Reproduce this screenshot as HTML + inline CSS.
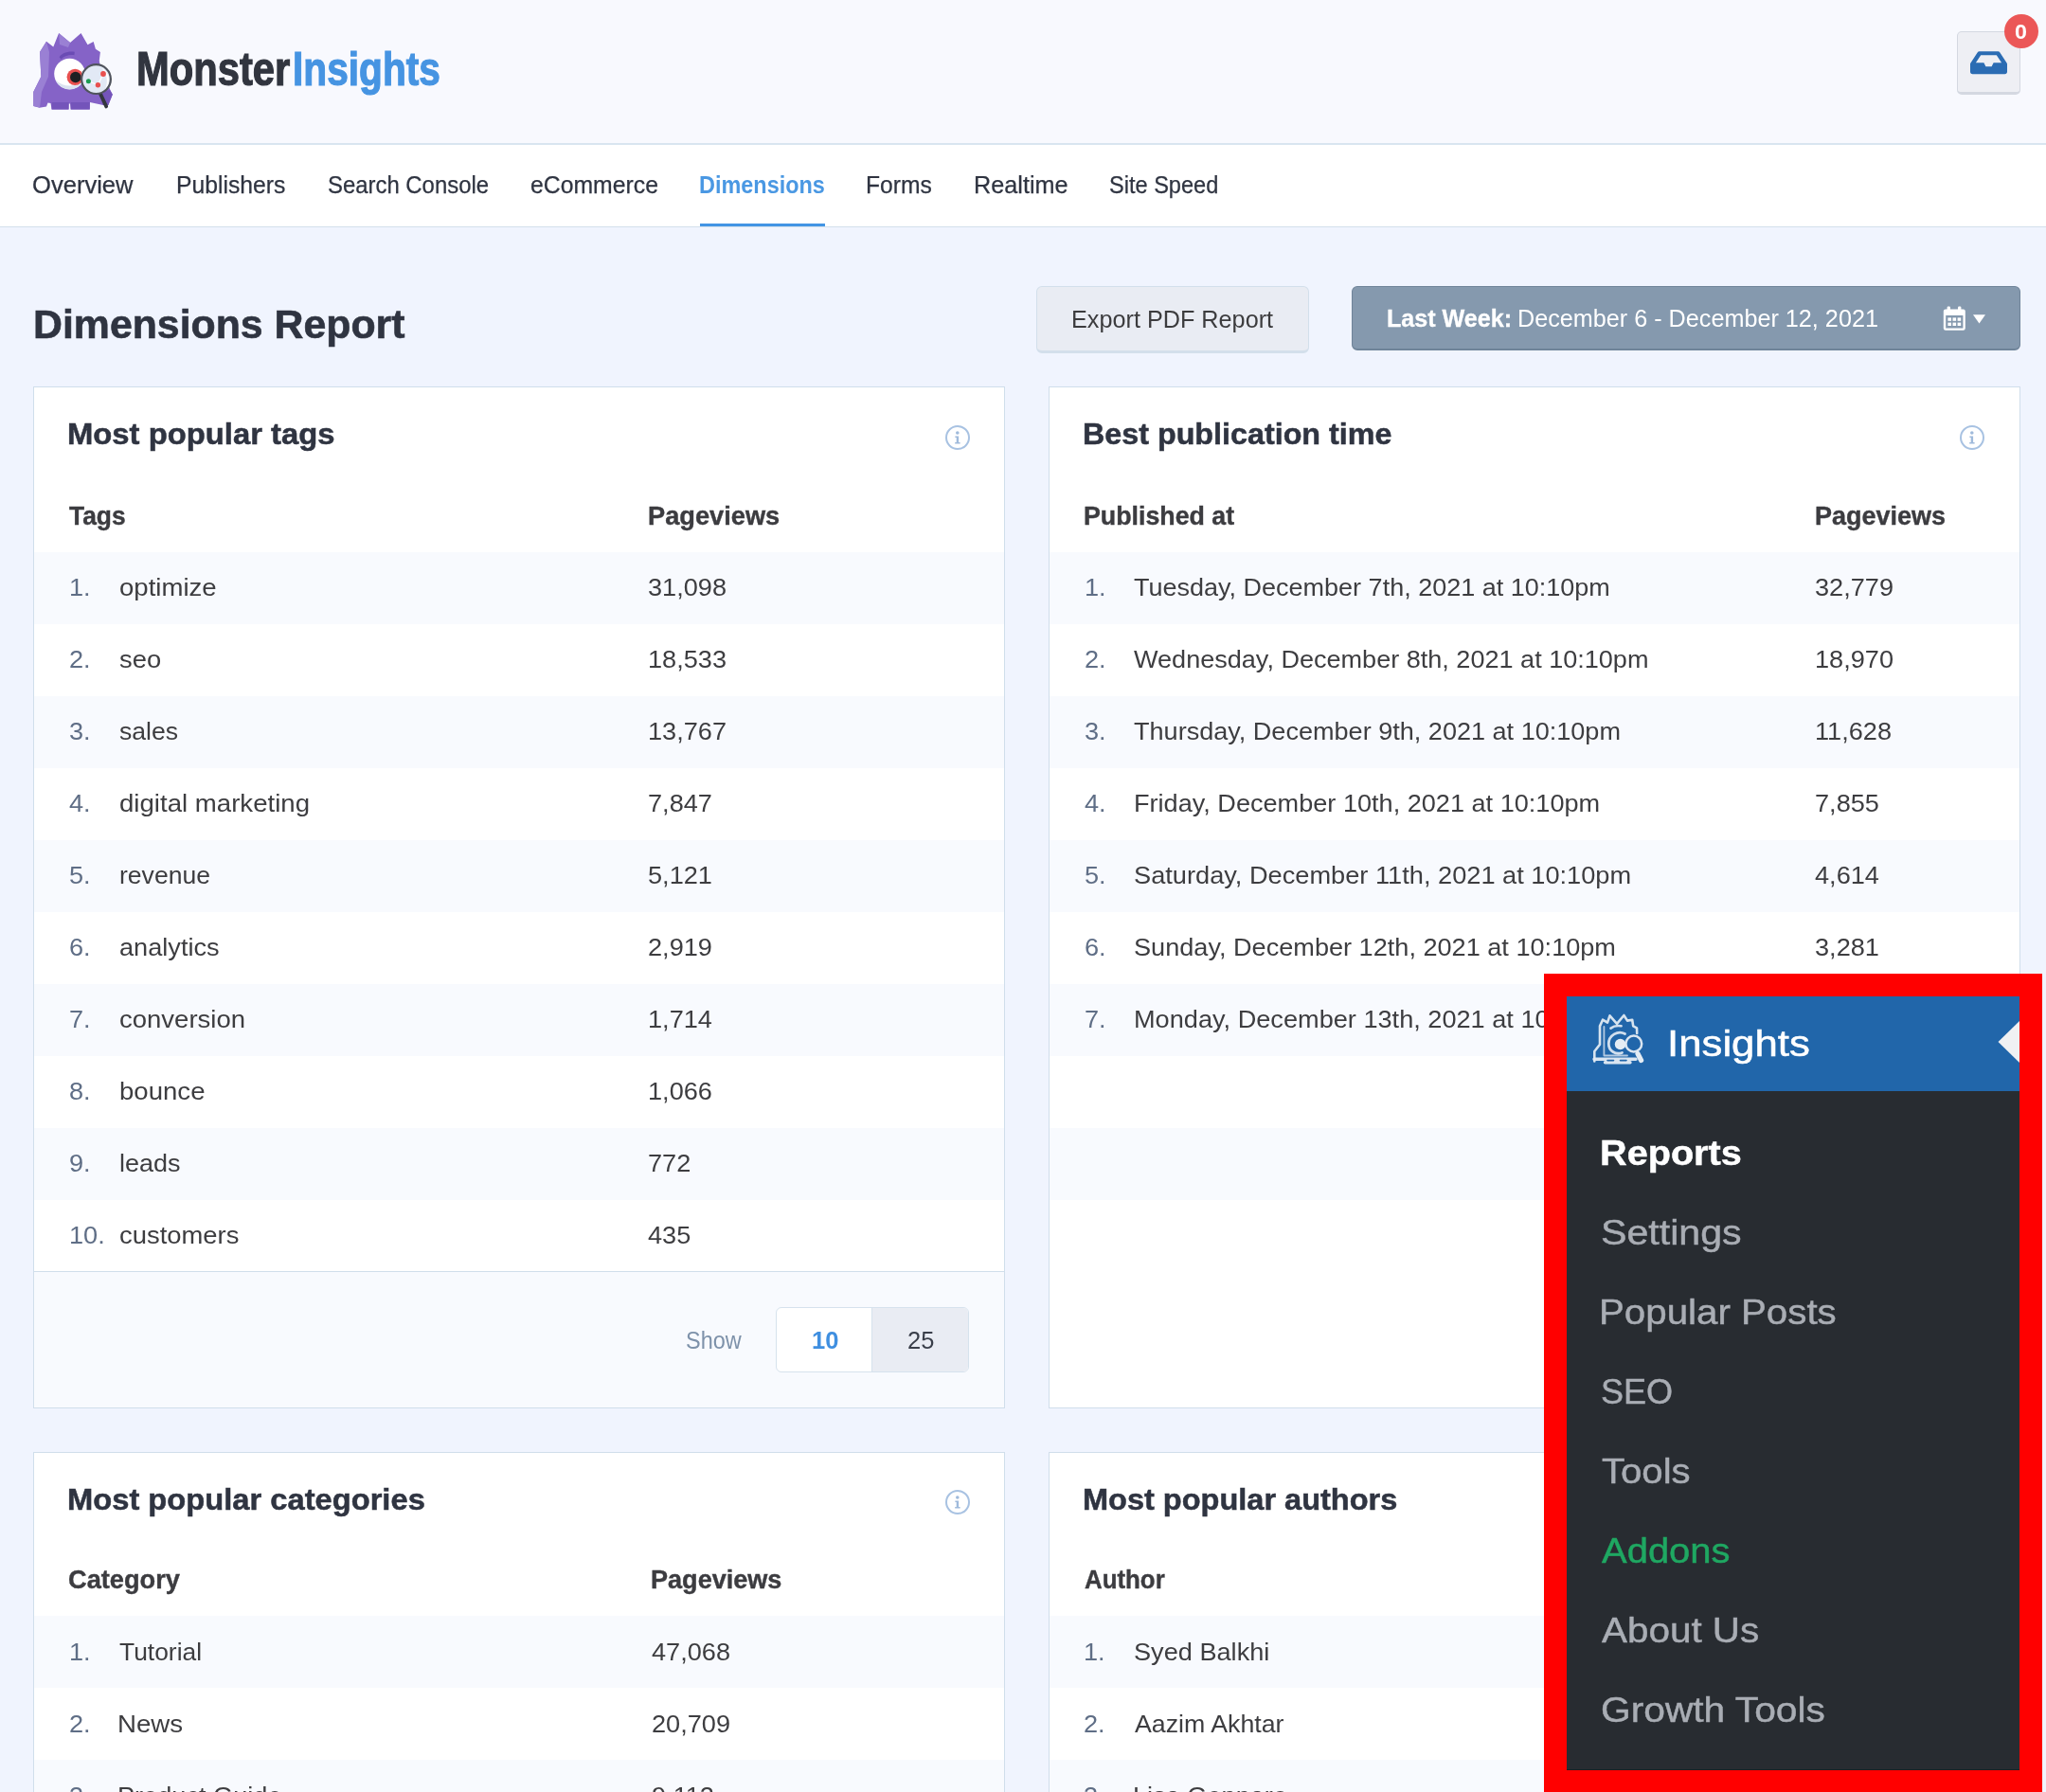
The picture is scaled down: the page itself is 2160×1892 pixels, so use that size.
<!DOCTYPE html>
<html lang="en"><head><meta charset="utf-8"><title>Dimensions Report - MonsterInsights</title>
<style>
html,body{margin:0;padding:0}
body{width:2160px;height:1892px;position:relative;background:#f0f4fe;font-family:"Liberation Sans",sans-serif}
.b{position:absolute;display:block}
.t{position:absolute;white-space:nowrap;line-height:1;transform-origin:0 0;font-family:"Liberation Sans",sans-serif}
#root{position:absolute;left:0;top:0;width:2160px;height:1892px;overflow:hidden;will-change:transform}
#ov{position:absolute;left:1630px;top:1028px;width:525.6px;height:900px;background:#ff0000}
</style></head><body><div id="root">
<div class="b" style="left:0px;top:0px;width:2160px;height:151px;background:#f8f9fe;border-bottom:2px solid #d9e5f0"></div>
<div class="b" style="left:0px;top:153px;width:2160px;height:86px;background:#fff;border-bottom:1px solid #d3e0ec"></div>
<div class="b" style="left:738.5px;top:235.6px;width:132px;height:3.2px;background:#4294e4"></div>
<div class="b" style="left:35px;top:408px;width:1026px;height:1079px;background:#fff;border:1px solid #d0deeb;box-sizing:border-box"></div>
<div class="b" style="left:36px;top:582.8px;width:1024px;height:76px;background:#f8fafe"></div>
<div class="b" style="left:36px;top:734.8px;width:1024px;height:76px;background:#f8fafe"></div>
<div class="b" style="left:36px;top:886.8px;width:1024px;height:76px;background:#f8fafe"></div>
<div class="b" style="left:36px;top:1038.8px;width:1024px;height:76px;background:#f8fafe"></div>
<div class="b" style="left:36px;top:1190.8px;width:1024px;height:76px;background:#f8fafe"></div>
<div class="b" style="left:36px;top:1342.3px;width:1024px;height:143.7px;background:#f8fafe;border-top:1px solid #d0deeb;box-sizing:border-box"></div>
<div class="b" style="left:1107px;top:408px;width:1026px;height:1079px;background:#fff;border:1px solid #d0deeb;box-sizing:border-box"></div>
<div class="b" style="left:1108px;top:582.8px;width:1024px;height:76px;background:#f8fafe"></div>
<div class="b" style="left:1108px;top:734.8px;width:1024px;height:76px;background:#f8fafe"></div>
<div class="b" style="left:1108px;top:886.8px;width:1024px;height:76px;background:#f8fafe"></div>
<div class="b" style="left:1108px;top:1038.8px;width:1024px;height:76px;background:#f8fafe"></div>
<div class="b" style="left:1108px;top:1190.8px;width:1024px;height:76px;background:#f8fafe"></div>
<div class="b" style="left:35px;top:1533px;width:1026px;height:600px;background:#fff;border:1px solid #d0deeb;box-sizing:border-box"></div>
<div class="b" style="left:36px;top:1705.5px;width:1024px;height:76px;background:#f8fafe"></div>
<div class="b" style="left:36px;top:1857.5px;width:1024px;height:76px;background:#f8fafe"></div>
<div class="b" style="left:36px;top:2009.5px;width:1024px;height:76px;background:#f8fafe"></div>
<div class="b" style="left:36px;top:2161.5px;width:1024px;height:76px;background:#f8fafe"></div>
<div class="b" style="left:36px;top:2313.5px;width:1024px;height:76px;background:#f8fafe"></div>
<div class="b" style="left:1107px;top:1533px;width:1026px;height:600px;background:#fff;border:1px solid #d0deeb;box-sizing:border-box"></div>
<div class="b" style="left:1108px;top:1705.5px;width:1024px;height:76px;background:#f8fafe"></div>
<div class="b" style="left:1108px;top:1857.5px;width:1024px;height:76px;background:#f8fafe"></div>
<div class="b" style="left:1108px;top:2009.5px;width:1024px;height:76px;background:#f8fafe"></div>
<div class="b" style="left:1108px;top:2161.5px;width:1024px;height:76px;background:#f8fafe"></div>
<div class="b" style="left:1108px;top:2313.5px;width:1024px;height:76px;background:#f8fafe"></div>
<div class="b" style="left:1093.8px;top:302.3px;width:288px;height:70.6px;background:#e9ecf3;border:1.5px solid #d3dfeb;border-bottom-width:3px;border-radius:6px;box-sizing:border-box"></div>
<div class="b" style="left:1426.5px;top:302.3px;width:706.3px;height:68px;background:#8599ae;border:1.5px solid #6f8499;border-bottom-width:2.5px;border-radius:6px;box-sizing:border-box"></div>
<div class="b" style="left:819.4px;top:1379.7px;width:203.8px;height:69.4px;background:#fff;border:1.5px solid #d6e2ed;border-radius:6px;box-sizing:border-box;overflow:hidden"><div style="position:absolute;left:100px;top:0;width:103px;height:70px;background:#e9ecf3;border-left:1.5px solid #d6e2ed"></div></div>
<div class="b" style="left:2066px;top:32.7px;width:66.6px;height:67.6px;background:#eeeff4;border:1.5px solid #d4d8e1;border-bottom-width:3px;border-radius:5px;box-sizing:border-box"></div>
<svg class="b" style="left:25px;top:25px" width="110" height="100" viewBox="0 0 110 100">
<path d="M10.300 87.100L10.300 72L18.400 55.800L17 30.100L24 18.700L31.300 24.600L37.100 10L49.100 20.100L60.500 10L67.500 22.300L73.700 19L75.900 26.800L80.900 30.100L79.800 39.100L81 46L91.500 70.300L93.800 74.800L89.300 85.900L84 86L70 83L69.800 90.400L49.700 90.400L49 84.500L47.600 84.500L47.400 90.400L29.600 90.400L28.500 84L25.500 83.500L24 87.500L16.700 88.700Z" fill="#8563c7"/>
<path d="M10.300 87.100L10.300 72L18.400 55.800L17 30.100L24 18.700L27 30L26 56L19 72L17 88.600Z" fill="#9a80d4"/>
<path d="M37.100 10L49.100 20.100L47 25L38 22Z" fill="#9a80d4"/>
<path d="M29.600 83h18v7.400h-18zM49.700 83h20v7.400h-20z" fill="#7454ba"/>
<path d="M80 73l11-3l2.800 4.800l-4.500 11.100l-6-.5z" fill="#7454ba"/>
<path d="M37.600 35.400C40 31 47 28.600 53.800 29.800L53.400 33.200C47.500 32.600 42.500 34.300 39.600 37.500Z" fill="#6a4bb4"/>
<circle cx="48.500" cy="53" r="16.300" fill="#ffffff"/>
<path d="M33.500 59.500A16.300 16.300 0 0 0 63.500 59.500A22 22 0 0 1 33.500 59.500Z" fill="#dbe3f0"/>
<circle cx="54.200" cy="56.300" r="8.600" fill="#e8504f"/>
<circle cx="54.800" cy="56.500" r="5.800" fill="#1e2023"/>
<path d="M80.600 73.200L87.200 87.400" stroke="#33363d" stroke-width="3.800" stroke-linecap="round"/>
<circle cx="76.500" cy="58.600" r="15.400" fill="#e2e9f5" stroke="#50545d" stroke-width="2.200"/>
<path d="M82 46.500A14 14 0 0 1 86 69A20 20 0 0 0 82 46.500Z" fill="#ffffff"/>
<path d="M68.400 60.800L78.400 64.700L84 53" stroke="#ffffff" stroke-width="1.200" fill="none"/>
<circle cx="84" cy="53" r="2.900" fill="#e8504f"/>
<circle cx="78.400" cy="64.700" r="2.700" fill="#e8504f"/>
<circle cx="68.400" cy="60.800" r="2.500" fill="#1a9b50"/>
</svg>

<svg class="b" style="left:996.8px;top:448.3px" width="28" height="28" viewBox="0 0 28 28"><circle cx="14" cy="14" r="12" fill="none" stroke="#a8c2e2" stroke-width="2"/><circle cx="13.800" cy="9" r="1.800" fill="#9fbadb"/><path d="M11.400 12.600h3.700v6.500h1.500v1.500h-5.400v-1.500h1.500v-5h-1.300z" fill="#9fbadb"/></svg>
<svg class="b" style="left:2068.3px;top:448.3px" width="28" height="28" viewBox="0 0 28 28"><circle cx="14" cy="14" r="12" fill="none" stroke="#a8c2e2" stroke-width="2"/><circle cx="13.800" cy="9" r="1.800" fill="#9fbadb"/><path d="M11.400 12.600h3.700v6.500h1.500v1.500h-5.400v-1.500h1.500v-5h-1.300z" fill="#9fbadb"/></svg>
<svg class="b" style="left:996.8px;top:1571.8px" width="28" height="28" viewBox="0 0 28 28"><circle cx="14" cy="14" r="12" fill="none" stroke="#a8c2e2" stroke-width="2"/><circle cx="13.800" cy="9" r="1.800" fill="#9fbadb"/><path d="M11.400 12.600h3.700v6.500h1.500v1.500h-5.400v-1.500h1.500v-5h-1.300z" fill="#9fbadb"/></svg>
<svg class="b" style="left:2068.3px;top:1571.8px" width="28" height="28" viewBox="0 0 28 28"><circle cx="14" cy="14" r="12" fill="none" stroke="#a8c2e2" stroke-width="2"/><circle cx="13.800" cy="9" r="1.800" fill="#9fbadb"/><path d="M11.400 12.600h3.700v6.500h1.500v1.500h-5.400v-1.500h1.500v-5h-1.300z" fill="#9fbadb"/></svg>
<svg class="b" style="left:2051px;top:322.5px" width="25" height="28" viewBox="0 0 25 28">
<rect x="4.6" y="0.6" width="3.4" height="6" rx="1.2" fill="#fff"/><rect x="16" y="0.6" width="3.4" height="6" rx="1.2" fill="#fff"/>
<path d="M3 3.4h18.6a2.2 2.2 0 0 1 2.2 2.2v18a2.2 2.2 0 0 1-2.2 2.2H3a2.2 2.2 0 0 1-2.2-2.2v-18A2.2 2.2 0 0 1 3 3.4zM3.2 10v13.4h18.2V10z" fill="#fff" fill-rule="evenodd"/>
<g fill="#fff"><rect x="5.4" y="12.4" width="3.6" height="3.4"/><rect x="10.5" y="12.4" width="3.6" height="3.4"/><rect x="15.6" y="12.4" width="3.6" height="3.4"/>
<rect x="5.4" y="17.6" width="3.6" height="3.4"/><rect x="10.5" y="17.6" width="3.6" height="3.4"/><rect x="15.6" y="17.6" width="3.6" height="3.4"/></g></svg>
<svg class="b" style="left:2083px;top:332px" width="13" height="10" viewBox="0 0 13 10"><path d="M0 0.3h13L6.5 9.6z" fill="#fff"/></svg>
<svg class="b" style="left:2079px;top:52.5px" width="41" height="27" viewBox="0 0 41 27">
<path d="M10.6 1.2h19.8c.8 0 1.4.3 1.8 1l7.4 11.2c.3.4.4.9.4 1.400v8c0 1.500-1 2.500-2.500 2.500H3.500C2 25.300 1 24.300 1 22.800v-8c0-.5.100-1 .4-1.400L8.800 2.200c.4-.7 1-1 1.800-1zM12.200 5.200L6.900 13.200h8.500l2 4h6.200l2-4h8.500l-5.300-8z" fill="#2b6cb3" fill-rule="evenodd"/></svg>
<span class="t" style="left:143.5px;top:47.6px;font-size:50px;color:#31353f;transform:scaleX(0.8346);font-weight:700;-webkit-text-stroke:1.2px #31353f">Monster</span>
<span class="t" style="left:308.6px;top:47.6px;font-size:50px;color:#4694e2;transform:scaleX(0.8134);font-weight:700;-webkit-text-stroke:1.2px #4694e2">Insights</span>
<span class="t" style="left:34.2px;top:183.2px;font-size:25px;color:#2f3441;transform:scaleX(1.0227);-webkit-text-stroke:0.25px #2f3441">Overview</span>
<span class="t" style="left:185.9px;top:183.2px;font-size:25px;color:#2f3441;transform:scaleX(0.9893);-webkit-text-stroke:0.25px #2f3441">Publishers</span>
<span class="t" style="left:346.0px;top:183.2px;font-size:25px;color:#2f3441;transform:scaleX(0.9558);-webkit-text-stroke:0.25px #2f3441">Search Console</span>
<span class="t" style="left:559.8px;top:183.2px;font-size:25px;color:#2f3441;transform:scaleX(0.9915);-webkit-text-stroke:0.25px #2f3441">eCommerce</span>
<span class="t" style="left:738.3px;top:183.2px;font-size:25px;color:#4a98e3;transform:scaleX(0.9378);font-weight:700">Dimensions</span>
<span class="t" style="left:914.4px;top:183.2px;font-size:25px;color:#2f3441;transform:scaleX(0.9850);-webkit-text-stroke:0.25px #2f3441">Forms</span>
<span class="t" style="left:1027.8px;top:183.2px;font-size:25px;color:#2f3441;transform:scaleX(1.0090);-webkit-text-stroke:0.25px #2f3441">Realtime</span>
<span class="t" style="left:1171.1px;top:183.2px;font-size:25px;color:#2f3441;transform:scaleX(0.9426);-webkit-text-stroke:0.25px #2f3441">Site Speed</span>
<span class="t" style="left:34.9px;top:322.4px;font-size:42px;color:#2f3441;transform:scaleX(1.0194);font-weight:700;-webkit-text-stroke:0.6px #2f3441">Dimensions Report</span>
<span class="t" style="left:1130.8px;top:325.0px;font-size:25px;color:#3c3c3e;transform:scaleX(1.0089)">Export PDF Report</span>
<span class="t" style="left:1463.8px;top:323.5px;font-size:25px;color:#ffffff;transform:scaleX(1.0046);font-weight:700;-webkit-text-stroke:0.3px #ffffff">Last Week:</span>
<span class="t" style="left:1601.8px;top:323.5px;font-size:25px;color:#ffffff;transform:scaleX(1.0078)">December 6 - December 12, 2021</span>
<span class="t" style="left:71.1px;top:443.1px;font-size:31px;color:#2f3441;transform:scaleX(1.0584);font-weight:700;-webkit-text-stroke:0.5px #2f3441">Most popular tags</span>
<span class="t" style="left:72.8px;top:532.2px;font-size:27px;color:#3c3c40;transform:scaleX(0.9767);font-weight:700;-webkit-text-stroke:0.4px #3c3c40">Tags</span>
<span class="t" style="left:683.6px;top:532.2px;font-size:27px;color:#3c3c40;transform:scaleX(1.0083);font-weight:700;-webkit-text-stroke:0.4px #3c3c40">Pageviews</span>
<span class="t" style="left:72.6px;top:607.4px;font-size:26px;color:#5f6e86;transform:scaleX(1.0441)">1.</span>
<span class="t" style="left:125.5px;top:607.4px;font-size:26px;color:#3d3d40;transform:scaleX(1.0607)">optimize</span>
<span class="t" style="left:684.3px;top:607.4px;font-size:26px;color:#3d3d40;transform:scaleX(1.0441)">31,098</span>
<span class="t" style="left:72.6px;top:683.4px;font-size:26px;color:#5f6e86;transform:scaleX(1.0441)">2.</span>
<span class="t" style="left:125.5px;top:683.4px;font-size:26px;color:#3d3d40;transform:scaleX(1.0516)">seo</span>
<span class="t" style="left:684.3px;top:683.4px;font-size:26px;color:#3d3d40;transform:scaleX(1.0441)">18,533</span>
<span class="t" style="left:72.6px;top:759.4px;font-size:26px;color:#5f6e86;transform:scaleX(1.0441)">3.</span>
<span class="t" style="left:125.5px;top:759.4px;font-size:26px;color:#3d3d40;transform:scaleX(1.0231)">sales</span>
<span class="t" style="left:684.3px;top:759.4px;font-size:26px;color:#3d3d40;transform:scaleX(1.0441)">13,767</span>
<span class="t" style="left:72.6px;top:835.4px;font-size:26px;color:#5f6e86;transform:scaleX(1.0441)">4.</span>
<span class="t" style="left:125.5px;top:835.4px;font-size:26px;color:#3d3d40;transform:scaleX(1.0620)">digital marketing</span>
<span class="t" style="left:684.3px;top:835.4px;font-size:26px;color:#3d3d40;transform:scaleX(1.0441)">7,847</span>
<span class="t" style="left:72.6px;top:911.4px;font-size:26px;color:#5f6e86;transform:scaleX(1.0441)">5.</span>
<span class="t" style="left:125.5px;top:911.4px;font-size:26px;color:#3d3d40;transform:scaleX(1.0214)">revenue</span>
<span class="t" style="left:684.3px;top:911.4px;font-size:26px;color:#3d3d40;transform:scaleX(1.0441)">5,121</span>
<span class="t" style="left:72.6px;top:987.4px;font-size:26px;color:#5f6e86;transform:scaleX(1.0441)">6.</span>
<span class="t" style="left:125.5px;top:987.4px;font-size:26px;color:#3d3d40;transform:scaleX(1.0439)">analytics</span>
<span class="t" style="left:684.3px;top:987.4px;font-size:26px;color:#3d3d40;transform:scaleX(1.0441)">2,919</span>
<span class="t" style="left:72.6px;top:1063.4px;font-size:26px;color:#5f6e86;transform:scaleX(1.0441)">7.</span>
<span class="t" style="left:125.5px;top:1063.4px;font-size:26px;color:#3d3d40;transform:scaleX(1.0581)">conversion</span>
<span class="t" style="left:684.3px;top:1063.4px;font-size:26px;color:#3d3d40;transform:scaleX(1.0441)">1,714</span>
<span class="t" style="left:72.6px;top:1139.4px;font-size:26px;color:#5f6e86;transform:scaleX(1.0441)">8.</span>
<span class="t" style="left:125.5px;top:1139.4px;font-size:26px;color:#3d3d40;transform:scaleX(1.0608)">bounce</span>
<span class="t" style="left:684.3px;top:1139.4px;font-size:26px;color:#3d3d40;transform:scaleX(1.0441)">1,066</span>
<span class="t" style="left:72.6px;top:1215.4px;font-size:26px;color:#5f6e86;transform:scaleX(1.0441)">9.</span>
<span class="t" style="left:125.5px;top:1215.4px;font-size:26px;color:#3d3d40;transform:scaleX(1.0377)">leads</span>
<span class="t" style="left:684.3px;top:1215.4px;font-size:26px;color:#3d3d40;transform:scaleX(1.0441)">772</span>
<span class="t" style="left:72.6px;top:1291.4px;font-size:26px;color:#5f6e86;transform:scaleX(1.0441)">10.</span>
<span class="t" style="left:125.5px;top:1291.4px;font-size:26px;color:#3d3d40;transform:scaleX(1.0540)">customers</span>
<span class="t" style="left:684.3px;top:1291.4px;font-size:26px;color:#3d3d40;transform:scaleX(1.0441)">435</span>
<span class="t" style="left:1143.1px;top:443.1px;font-size:31px;color:#2f3441;transform:scaleX(1.0413);font-weight:700;-webkit-text-stroke:0.5px #2f3441">Best publication time</span>
<span class="t" style="left:1143.8px;top:532.2px;font-size:27px;color:#3c3c40;transform:scaleX(0.9916);font-weight:700;-webkit-text-stroke:0.4px #3c3c40">Published at</span>
<span class="t" style="left:1916.4px;top:532.2px;font-size:27px;color:#3c3c40;transform:scaleX(0.9995);font-weight:700;-webkit-text-stroke:0.4px #3c3c40">Pageviews</span>
<span class="t" style="left:1144.6px;top:607.4px;font-size:26px;color:#5f6e86;transform:scaleX(1.0441)">1.</span>
<span class="t" style="left:1196.7px;top:607.4px;font-size:26px;color:#3d3d40;transform:scaleX(1.0385)">Tuesday, December 7th, 2021 at 10:10pm</span>
<span class="t" style="left:1915.9px;top:607.4px;font-size:26px;color:#3d3d40;transform:scaleX(1.0441)">32,779</span>
<span class="t" style="left:1144.6px;top:683.4px;font-size:26px;color:#5f6e86;transform:scaleX(1.0441)">2.</span>
<span class="t" style="left:1196.7px;top:683.4px;font-size:26px;color:#3d3d40;transform:scaleX(1.0406)">Wednesday, December 8th, 2021 at 10:10pm</span>
<span class="t" style="left:1915.9px;top:683.4px;font-size:26px;color:#3d3d40;transform:scaleX(1.0441)">18,970</span>
<span class="t" style="left:1144.6px;top:759.4px;font-size:26px;color:#5f6e86;transform:scaleX(1.0441)">3.</span>
<span class="t" style="left:1196.7px;top:759.4px;font-size:26px;color:#3d3d40;transform:scaleX(1.0408)">Thursday, December 9th, 2021 at 10:10pm</span>
<span class="t" style="left:1915.9px;top:759.4px;font-size:26px;color:#3d3d40;transform:scaleX(1.0441)">11,628</span>
<span class="t" style="left:1144.6px;top:835.4px;font-size:26px;color:#5f6e86;transform:scaleX(1.0441)">4.</span>
<span class="t" style="left:1196.7px;top:835.4px;font-size:26px;color:#3d3d40;transform:scaleX(1.0424)">Friday, December 10th, 2021 at 10:10pm</span>
<span class="t" style="left:1915.9px;top:835.4px;font-size:26px;color:#3d3d40;transform:scaleX(1.0441)">7,855</span>
<span class="t" style="left:1144.6px;top:911.4px;font-size:26px;color:#5f6e86;transform:scaleX(1.0441)">5.</span>
<span class="t" style="left:1196.7px;top:911.4px;font-size:26px;color:#3d3d40;transform:scaleX(1.0461)">Saturday, December 11th, 2021 at 10:10pm</span>
<span class="t" style="left:1915.9px;top:911.4px;font-size:26px;color:#3d3d40;transform:scaleX(1.0441)">4,614</span>
<span class="t" style="left:1144.6px;top:987.4px;font-size:26px;color:#5f6e86;transform:scaleX(1.0441)">6.</span>
<span class="t" style="left:1196.7px;top:987.4px;font-size:26px;color:#3d3d40;transform:scaleX(1.0428)">Sunday, December 12th, 2021 at 10:10pm</span>
<span class="t" style="left:1915.9px;top:987.4px;font-size:26px;color:#3d3d40;transform:scaleX(1.0441)">3,281</span>
<span class="t" style="left:1144.6px;top:1063.4px;font-size:26px;color:#5f6e86;transform:scaleX(1.0441)">7.</span>
<span class="t" style="left:1196.7px;top:1063.4px;font-size:26px;color:#3d3d40;transform:scaleX(1.0441)">Monday, December 13th, 2021 at 10:10pm</span>
<span class="t" style="left:1915.9px;top:1063.4px;font-size:26px;color:#3d3d40;transform:scaleX(1.0441)">2,436</span>
<span class="t" style="left:71.1px;top:1567.7px;font-size:31px;color:#2f3441;transform:scaleX(1.0545);font-weight:700;-webkit-text-stroke:0.5px #2f3441">Most popular categories</span>
<span class="t" style="left:71.8px;top:1654.8px;font-size:27px;color:#3c3c40;transform:scaleX(1.0076);font-weight:700;-webkit-text-stroke:0.4px #3c3c40">Category</span>
<span class="t" style="left:687.0px;top:1654.8px;font-size:27px;color:#3c3c40;transform:scaleX(1.0024);font-weight:700;-webkit-text-stroke:0.4px #3c3c40">Pageviews</span>
<span class="t" style="left:72.6px;top:1730.8px;font-size:26px;color:#5f6e86;transform:scaleX(1.0441)">1.</span>
<span class="t" style="left:126.4px;top:1730.8px;font-size:26px;color:#3d3d40;transform:scaleX(1.0158)">Tutorial</span>
<span class="t" style="left:687.5px;top:1730.8px;font-size:26px;color:#3d3d40;transform:scaleX(1.0441)">47,068</span>
<span class="t" style="left:72.6px;top:1806.8px;font-size:26px;color:#5f6e86;transform:scaleX(1.0441)">2.</span>
<span class="t" style="left:124.3px;top:1806.8px;font-size:26px;color:#3d3d40;transform:scaleX(1.0633)">News</span>
<span class="t" style="left:687.5px;top:1806.8px;font-size:26px;color:#3d3d40;transform:scaleX(1.0441)">20,709</span>
<span class="t" style="left:72.6px;top:1882.8px;font-size:26px;color:#5f6e86;transform:scaleX(1.0441)">3.</span>
<span class="t" style="left:124.3px;top:1882.8px;font-size:26px;color:#3d3d40;transform:scaleX(1.0441)">Product Guide</span>
<span class="t" style="left:687.5px;top:1882.8px;font-size:26px;color:#3d3d40;transform:scaleX(1.0441)">9,112</span>
<span class="t" style="left:1143.1px;top:1567.7px;font-size:31px;color:#2f3441;transform:scaleX(1.0486);font-weight:700;-webkit-text-stroke:0.5px #2f3441">Most popular authors</span>
<span class="t" style="left:1144.8px;top:1654.8px;font-size:27px;color:#3c3c40;transform:scaleX(0.9577);font-weight:700;-webkit-text-stroke:0.4px #3c3c40">Author</span>
<span class="t" style="left:1916.4px;top:1654.8px;font-size:27px;color:#3c3c40;transform:scaleX(0.9995);font-weight:700;-webkit-text-stroke:0.4px #3c3c40">Pageviews</span>
<span class="t" style="left:1143.9px;top:1730.8px;font-size:26px;color:#5f6e86;transform:scaleX(1.0441)">1.</span>
<span class="t" style="left:1196.7px;top:1730.8px;font-size:26px;color:#3d3d40;transform:scaleX(1.0441)">Syed Balkhi</span>
<span class="t" style="left:1916.7px;top:1730.8px;font-size:26px;color:#3d3d40;transform:scaleX(1.0441)">38,112</span>
<span class="t" style="left:1143.9px;top:1806.8px;font-size:26px;color:#5f6e86;transform:scaleX(1.0441)">2.</span>
<span class="t" style="left:1197.7px;top:1806.8px;font-size:26px;color:#3d3d40;transform:scaleX(1.0281)">Aazim Akhtar</span>
<span class="t" style="left:1916.7px;top:1806.8px;font-size:26px;color:#3d3d40;transform:scaleX(1.0441)">21,904</span>
<span class="t" style="left:1143.9px;top:1882.8px;font-size:26px;color:#5f6e86;transform:scaleX(1.0441)">3.</span>
<span class="t" style="left:1195.6px;top:1882.8px;font-size:26px;color:#3d3d40;transform:scaleX(1.0441)">Lisa Gennaro</span>
<span class="t" style="left:1916.7px;top:1882.8px;font-size:26px;color:#3d3d40;transform:scaleX(1.0441)">9,870</span>
<span class="t" style="left:724.1px;top:1401.5px;font-size:26px;color:#7e92aa;transform:scaleX(0.9026)">Show</span>
<span class="t" style="left:857.2px;top:1401.5px;font-size:26px;color:#3f8fe0;transform:scaleX(0.9832);font-weight:700">10</span>
<span class="t" style="left:957.5px;top:1401.5px;font-size:26px;color:#3a3f4a;transform:scaleX(0.9796)">25</span>
<div id="ov"></div>
<div class="b" style="left:1654px;top:1052.3px;width:477.8px;height:100.2px;background:#2166aa"></div>
<div class="b" style="left:1654px;top:1152.4px;width:477.8px;height:717px;background:#282c31;border-bottom:1.5px solid #1c1f23;box-sizing:border-box"></div>
<svg class="b" style="left:2109px;top:1078px" width="23" height="44" viewBox="0 0 23 44"><path d="M23 0v44L0.500 22z" fill="#f0f1f3"/></svg>
<svg class="b" style="left:1670px;top:1060px" width="80" height="75" viewBox="0 0 80 75" fill="none" stroke="#fff" stroke-linejoin="round" stroke-linecap="round" opacity=".88">
<path d="M13.300 60.500V50L19 42.700V23.400L22 16.700L27 19.700L29.500 12.300L37 20.900L44.400 12L48 17.600L53.200 16.700L54.200 23.400L58 25.300L58.200 31" stroke-width="2.600" opacity=".93"/>
<path d="M23.400 24V54.500H48" stroke-width="1.800" opacity=".75"/>
<path d="M30.500 25.600C33.500 23.300 38 22.600 41.600 23.300" stroke-width="2.600" opacity=".9"/>
<path d="M45.500 31.500C38 27.500 28.300 33 28.300 42C28.300 49.500 35.500 54 42.500 51.500" stroke-width="2.800" opacity=".9"/>
<circle cx="40.600" cy="42.500" r="5.800" fill="#fff" stroke="none"/>
<circle cx="54.800" cy="42" r="8.400" stroke-width="2.500" opacity=".95"/>
<path d="M59 52.500L62.600 59.500" stroke-width="5.200"/>
<path d="M13 58.200H57M24.500 61.800H51" stroke-width="3.400" opacity=".95"/>
<path d="M27 59.600h6.500M40.500 59.600h6.500" stroke="#2166aa" stroke-width="1.600"/>
</svg>

<div class="b" style="left:2115.800px;top:14.800px;width:36.400px;height:36.400px;border-radius:50%;background:#eb5757"></div>
<span class="t" style="left:1760.1px;top:1083.0px;font-size:38px;color:#ffffff;transform:scaleX(1.1516);-webkit-text-stroke:0.5px #ffffff">Insights</span>
<span class="t" style="left:1689.3px;top:1199.2px;font-size:37px;color:#ffffff;transform:scaleX(1.0713);font-weight:700;-webkit-text-stroke:0.45px #ffffff">Reports</span>
<span class="t" style="left:1690.3px;top:1283.2px;font-size:37px;color:#a9adb4;transform:scaleX(1.1120);-webkit-text-stroke:0.45px #a9adb4">Settings</span>
<span class="t" style="left:1688.1px;top:1367.1px;font-size:37px;color:#a9adb4;transform:scaleX(1.0884);-webkit-text-stroke:0.45px #a9adb4">Popular Posts</span>
<span class="t" style="left:1690.4px;top:1451.1px;font-size:37px;color:#a9adb4;transform:scaleX(0.9744);-webkit-text-stroke:0.45px #a9adb4">SEO</span>
<span class="t" style="left:1691.4px;top:1535.0px;font-size:37px;color:#a9adb4;transform:scaleX(1.0841);-webkit-text-stroke:0.45px #a9adb4">Tools</span>
<span class="t" style="left:1691.4px;top:1619.0px;font-size:37px;color:#1fa862;transform:scaleX(1.0801);-webkit-text-stroke:0.45px #1fa862">Addons</span>
<span class="t" style="left:1691.4px;top:1702.9px;font-size:37px;color:#a9adb4;transform:scaleX(1.0923);-webkit-text-stroke:0.45px #a9adb4">About Us</span>
<span class="t" style="left:1690.3px;top:1786.8px;font-size:37px;color:#a9adb4;transform:scaleX(1.1007);-webkit-text-stroke:0.45px #a9adb4">Growth Tools</span>
<span class="t" style="left:2126.5px;top:22.9px;font-size:22px;color:#ffffff;transform:scaleX(1.0583);font-weight:700">0</span>
</div></body></html>
